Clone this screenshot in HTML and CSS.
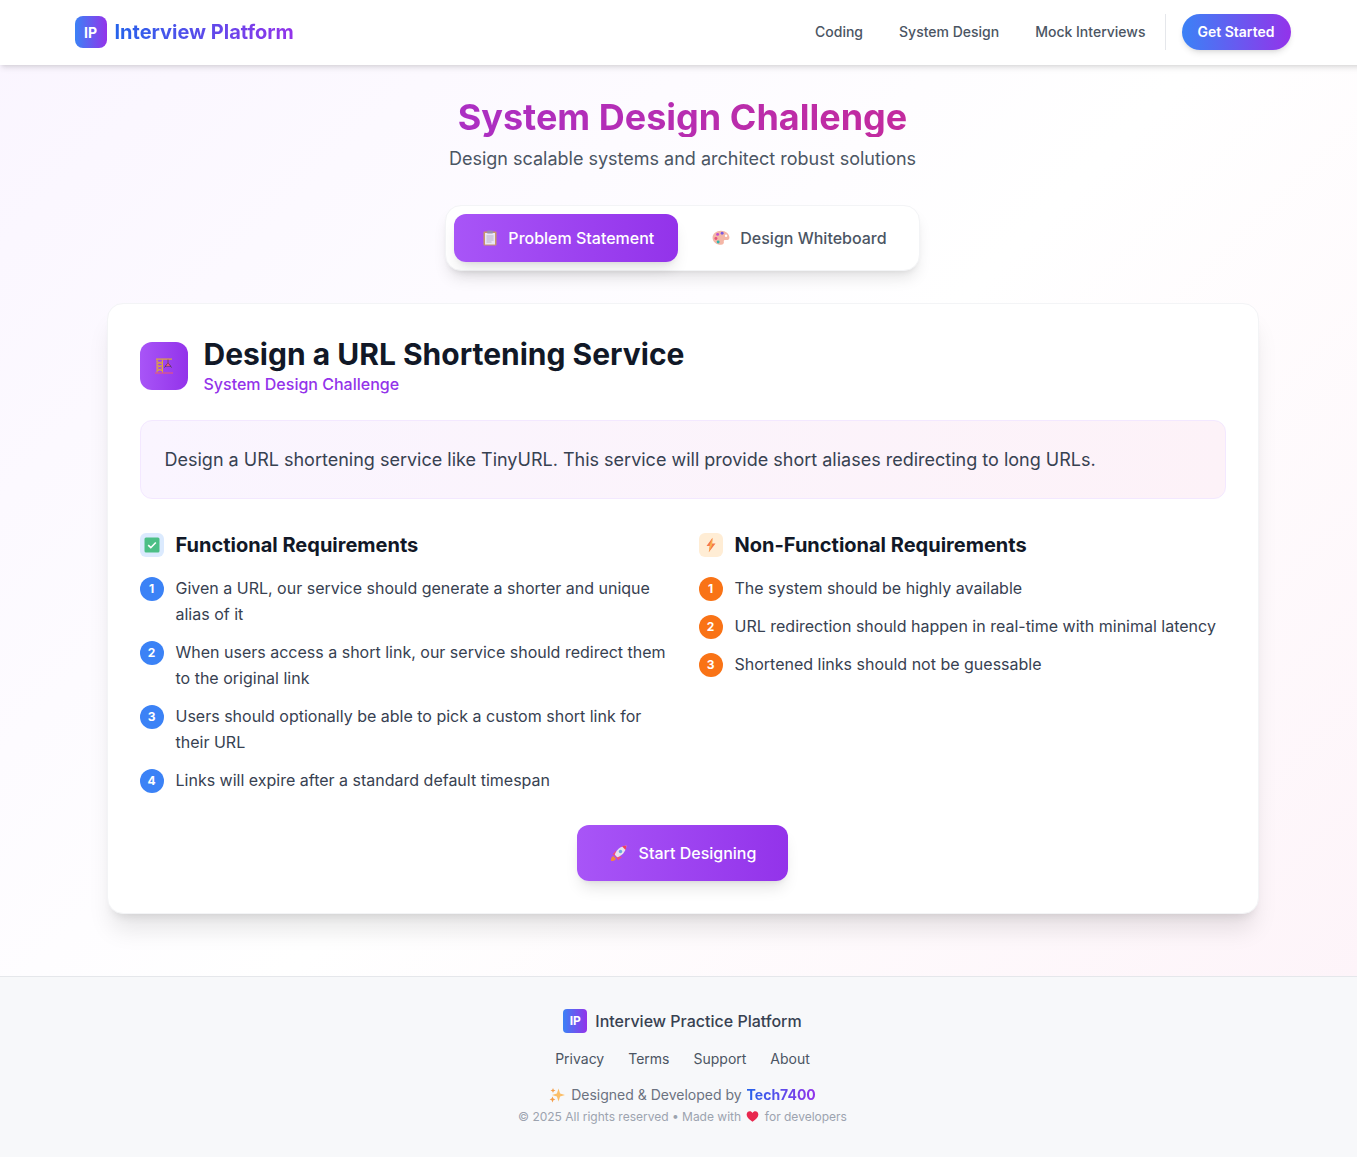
FILE: index.html
```html
<!DOCTYPE html>
<html lang="en">
<head>
  <meta charset="UTF-8">
  <meta name="viewport" content="width=device-width, initial-scale=1.0">
  <title>System Design Challenge</title>
  <link rel="stylesheet" href="styles.css">
</head>
<body>
  <div class="page">
    <nav class="navbar">
      <div class="nav-inner">
        <a class="brand">
          <span class="logo">IP</span>
          <span class="brand-name">Interview Platform</span>
        </a>
        <div class="nav-links">
          <a>Coding</a>
          <a>System Design</a>
          <a>Mock Interviews</a>
          <span class="nav-divider"></span>
          <button class="get-started">Get Started</button>
        </div>
      </div>
    </nav>

    <main class="main">
      <header class="hero">
        <h1>System Design Challenge</h1>
        <p>Design scalable systems and architect robust solutions</p>
      </header>

      <div class="tabs">
        <button class="tab tab-active">
          <svg class="emoji" viewBox="0 0 16 16">
            <rect x="1.500" y="1.500" width="13" height="14" rx="1" fill="#c9976b"/>
            <rect x="3" y="3" width="10" height="11.500" fill="#e9e4f4"/>
            <rect x="5" y="0.600" width="6" height="3" rx="0.800" fill="#9a8fae"/>
            <path d="M4.500 6h7M4.500 8h7M4.500 10h7M4.500 12h5" stroke="#b3a9c9" stroke-width="0.900"/>
          </svg>
          Problem Statement
        </button>
        <button class="tab">
          <svg class="emoji emoji-wide" viewBox="0 0 16 16">
            <path d="M8 1.500c4.200 0 7.500 2.700 7.500 6 0 1.800-1.400 2.600-3 2.300-1.500-.3-2.300.3-2 1.500.3 1.400-.5 2.700-2.500 2.700C3.800 14 .5 11.200.5 7.700S3.800 1.500 8 1.500z" fill="#f4b6a6"/>
            <circle cx="5" cy="4.800" r="1.300" fill="#c04fd0"/>
            <circle cx="9" cy="3.800" r="1.300" fill="#7a5be0"/>
            <circle cx="3.500" cy="8.500" r="1.300" fill="#e8577a"/>
            <circle cx="5.500" cy="11.500" r="1.300" fill="#2fb7b0"/>
            <circle cx="12.500" cy="6" r="1.100" fill="#fff"/>
          </svg>
          Design Whiteboard
        </button>
      </div>

      <section class="card">
        <div class="card-head">
          <span class="card-icon">
            <svg viewBox="0 0 20 20" width="20" height="20">
              <path d="M2 2.500h16v1.200H2z" fill="#e0a83a"/>
              <path d="M3 3.500v13M8.500 3.500v13M3 5.500l5.500 2.500M8.500 5.500L3 8M3 9l5.500 2.500M8.500 9L3 11.500M3 12.500L8.500 15M8.500 12.500L3 15" stroke="#e0a83a" stroke-width="1" fill="none"/>
              <path d="M14 3.500v3.500" stroke="#7a4a3a" stroke-width="0.800"/>
              <path d="M14 7l-3.500 4.500M14 7l3.500 4.500M11.500 10h5" stroke="#5b3a50" stroke-width="1" fill="none"/>
              <path d="M14 7l-2 3h4z" fill="#e8577a"/>
              <path d="M1 17h18" stroke="#ef5a6f" stroke-width="1"/>
            </svg>
          </span>
          <div>
            <h2>Design a URL Shortening Service</h2>
            <p class="card-sub">System Design Challenge</p>
          </div>
        </div>

        <div class="description">
          Design a URL shortening service like TinyURL. This service will provide short aliases redirecting to long URLs.
        </div>

        <div class="req-grid">
          <div class="req-col">
            <h3>
              <span class="req-icon req-icon-blue">
                <svg viewBox="0 0 16 16" width="16" height="16">
                  <rect x="0.500" y="0.500" width="15" height="15" rx="1.500" fill="#4cbf86"/>
                  <path d="M4.200 8.200l2.600 2.500 5-5.200" stroke="#fff" stroke-width="1.600" fill="none"/>
                </svg>
              </span>
              Functional Requirements
            </h3>
            <ul class="req-list">
              <li><span class="num">1</span><span>Given a URL, our service should generate a shorter and unique alias of it</span></li>
              <li><span class="num">2</span><span>When users access a short link, our service should redirect them to the original link</span></li>
              <li><span class="num">3</span><span>Users should optionally be able to pick a custom short link for their URL</span></li>
              <li><span class="num">4</span><span>Links will expire after a standard default timespan</span></li>
            </ul>
          </div>
          <div class="req-col">
            <h3>
              <span class="req-icon req-icon-orange">
                <svg viewBox="0 0 16 16" width="16" height="16">
                  <path d="M9.500 0.800L3.500 9h3.300l-1 6.200L12.500 6.500H9z" fill="#f5794a"/>
                  <path d="M9.500 0.800L6.500 9h.3l-1 6.200L9 8z" fill="#f9b24e"/>
                </svg>
              </span>
              Non-Functional Requirements
            </h3>
            <ul class="req-list req-list-orange">
              <li><span class="num">1</span><span>The system should be highly available</span></li>
              <li><span class="num">2</span><span>URL redirection should happen in real-time with minimal latency</span></li>
              <li><span class="num">3</span><span>Shortened links should not be guessable</span></li>
            </ul>
          </div>
        </div>

        <div class="start-row">
          <button class="start-btn">
            <svg class="emoji" viewBox="0 0 16 16">
              <path d="M0 16c-.2-2.600.6-4.300 2.400-4.900l2.500 2.500C4.300 15.400 2.600 16.200 0 16z" fill="#f08a3c"/>
              <path d="M1.500 9.500L5 5.500l1 5.500 5 1-4 3.500-1.500-3-2.500-2.500z" fill="#ef4f7d"/>
              <path d="M3.800 9.800C4.800 5.500 9 1.200 15.500 0.500c-.7 6.500-5 10.700-9.300 11.700z" fill="#e6e3ee"/>
              <path d="M11 1.300L15.500 0.500c-.1 1.600-.5 3.100-1 4.500z" fill="#ef3f5f"/>
              <circle cx="9.500" cy="6.500" r="1.700" fill="#6aa9e0"/>
            </svg>
            Start Designing
          </button>
        </div>
      </section>
    </main>

    <footer class="footer">
      <div class="footer-brand">
        <span class="logo logo-small">IP</span>
        <span>Interview Practice Platform</span>
      </div>
      <div class="footer-links">
        <a>Privacy</a>
        <a>Terms</a>
        <a>Support</a>
        <a>About</a>
      </div>
      <p class="credit">
        <svg class="emoji-small" viewBox="0 0 16 16">
          <path d="M9.500 1.500l1.600 4.900L16 8l-4.900 1.600L9.500 14.500 7.900 9.600 3 8l4.900-1.600z" fill="#fbbf6a"/>
          <path d="M3.500 9.500l.9 2 2 .9-2 .9-.9 2.200-.9-2.200-2-.9 2-.9z" fill="#f59e4a"/>
          <path d="M4 1l.7 1.800L6.500 3.500l-1.800.7L4 6l-.7-1.800-1.800-.7 1.800-.7z" fill="#f59e4a"/>
        </svg>
        Designed &amp; Developed by <strong>Tech7400</strong>
      </p>
      <p class="copyright">
        © 2025 All rights reserved • Made with
        <svg class="heart" viewBox="0 0 16 16">
          <path d="M8 14.500C3 11 .8 8.500.8 5.500.8 3 2.700 1.500 4.600 1.500 6 1.500 7.300 2.300 8 3.600 8.700 2.300 10 1.500 11.400 1.500c1.900 0 3.800 1.500 3.800 4 0 3-2.200 5.500-7.200 9z" fill="#e8284f"/>
        </svg>
        for developers
      </p>
    </footer>
  </div>
</body>
</html>
```

FILE: styles.css
```css
html {
  overflow-x: hidden;
}
body {
  margin: 0;
  font-family: Inter, "Noto Sans", sans-serif;
  color: #111827;
}
h1, h2, h3, p, ul {
  margin: 0;
  padding: 0;
}
button {
  font-family: inherit;
  border: 0;
  cursor: pointer;
}

.page {
  width: 1365px;
  background: linear-gradient(135deg, #faf5ff 0%, #ffffff 50%, #fdf2f8 100%);
}

/* navbar */
.navbar {
  position: relative;
  height: 65px;
  background: #fff;
  box-shadow: 0 4px 6px -1px rgba(0, 0, 0, 0.1), 0 2px 4px -2px rgba(0, 0, 0, 0.1);
}
.nav-inner {
  max-width: 1216px;
  height: 64px;
  margin: 0 auto;
  display: flex;
  align-items: center;
  justify-content: space-between;
}
.brand {
  display: flex;
  align-items: center;
  gap: 8px;
}
.logo {
  width: 32px;
  height: 32px;
  border-radius: 8px;
  display: flex;
  align-items: center;
  justify-content: center;
  color: #fff;
  font-size: 14px;
  font-weight: 700;
  background: linear-gradient(90deg, #3b82f6, #9333ea);
}
.logo-small {
  width: 24px;
  height: 24px;
  border-radius: 4px;
  font-size: 12px;
}
.brand-name {
  font-size: 20px;
  font-weight: 700;
  line-height: 28px;
  background: linear-gradient(90deg, #2563eb, #9333ea);
  -webkit-background-clip: text;
  background-clip: text;
  color: transparent;
}
.nav-links {
  display: flex;
  align-items: center;
  gap: 36px;
  font-size: 14px;
  font-weight: 500;
  color: #4b5563;
}
.nav-links a {
  padding-bottom: 2px;
}
.nav-divider {
  width: 1px;
  height: 36px;
  margin-left: -17px;
  margin-right: -20px;
  background: #e5e7eb;
}
.get-started {
  width: 109px;
  height: 36px;
  padding: 0 0 2px;
  border-radius: 18px;
  color: #fff;
  font-size: 14px;
  font-weight: 600;
  background: linear-gradient(90deg, #3b82f6, #9333ea);
  box-shadow: 0 4px 6px -1px rgba(0, 0, 0, 0.1), 0 2px 4px -2px rgba(0, 0, 0, 0.1);
}

/* main */
.main {
  padding: 32px 0 62px;
}
.hero {
  text-align: center;
}
.hero h1 {
  font-size: 36px;
  line-height: 40px;
  font-weight: 700;
  background: linear-gradient(90deg, #9333ea, #db2777);
  -webkit-background-clip: text;
  background-clip: text;
  color: transparent;
  margin-bottom: 8px;
}
.hero p {
  font-size: 18px;
  line-height: 28px;
  color: #4b5563;
}

.tabs {
  width: max-content;
  margin: 32px auto;
  padding: 8px;
  display: flex;
  gap: 8px;
  background: #fff;
  border: 1px solid #f3f4f6;
  border-radius: 16px;
  box-shadow: 0 10px 15px -3px rgba(0, 0, 0, 0.1), 0 4px 6px -4px rgba(0, 0, 0, 0.1);
}
.tab {
  height: 48px;
  padding: 0 24px;
  display: flex;
  align-items: center;
  gap: 8px;
  background: none;
  border-radius: 12px;
  font-size: 16px;
  font-weight: 500;
  color: #4b5563;
}
.tab-active {
  color: #fff;
  background: linear-gradient(90deg, #a855f7, #9333ea);
  box-shadow: 0 10px 15px -3px rgba(0, 0, 0, 0.1), 0 4px 6px -4px rgba(0, 0, 0, 0.1);
}
.emoji {
  width: 16px;
  height: 16px;
  margin: 0 2px 0 4px;
}
.emoji-wide {
  width: 18px;
  height: 18px;
  margin: 0 2px 0 2px;
}

/* card */
.card {
  width: 1086px;
  margin: 0 auto;
  padding: 32px;
  background: #fff;
  border: 1px solid #f3f4f6;
  border-radius: 16px;
  box-shadow: 0 20px 25px -5px rgba(0, 0, 0, 0.1), 0 8px 10px -6px rgba(0, 0, 0, 0.1);
}
.card-head {
  display: flex;
  align-items: center;
  gap: 16px;
  margin-bottom: 24px;
}
.card-icon {
  width: 48px;
  height: 48px;
  flex: none;
  border-radius: 12px;
  display: flex;
  align-items: center;
  justify-content: center;
  background: linear-gradient(90deg, #a855f7, #9333ea);
}
.card-head h2 {
  font-size: 30px;
  line-height: 36px;
  font-weight: 700;
}
.card-sub {
  font-size: 16px;
  line-height: 24px;
  font-weight: 500;
  color: #9333ea;
}
.description {
  padding: 24px;
  font-size: 18px;
  line-height: 29px;
  color: #374151;
  border: 1px solid #f3e8ff;
  border-radius: 12px;
  background: linear-gradient(90deg, #faf5ff, #fdf2f8);
}

.req-grid {
  display: grid;
  grid-template-columns: 1fr 1fr;
  gap: 32px;
  margin-top: 32px;
}
.req-col h3 {
  display: flex;
  align-items: center;
  gap: 12px;
  font-size: 20px;
  line-height: 28px;
  font-weight: 700;
  margin-bottom: 16px;
}
.req-icon {
  width: 24px;
  height: 24px;
  border-radius: 6px;
  display: flex;
  align-items: center;
  justify-content: center;
}
.req-icon-blue {
  background: #dbeafe;
}
.req-icon-orange {
  background: #ffedd5;
}
.req-list {
  list-style: none;
  display: flex;
  flex-direction: column;
  gap: 12px;
  font-size: 16px;
  line-height: 26px;
  color: #374151;
}
.req-list li {
  display: flex;
  gap: 12px;
}
.num {
  width: 24px;
  height: 24px;
  flex: none;
  margin-top: 2px;
  border-radius: 50%;
  display: flex;
  align-items: center;
  justify-content: center;
  color: #fff;
  font-size: 12px;
  font-weight: 700;
  background: #3b82f6;
}
.req-list-orange .num {
  background: #f97316;
}

.start-row {
  display: flex;
  justify-content: center;
  margin-top: 32px;
}
.start-btn {
  height: 56px;
  padding: 0 32px;
  display: flex;
  align-items: center;
  gap: 8px;
  color: #fff;
  font-size: 16px;
  font-weight: 500;
  border-radius: 12px;
  background: linear-gradient(90deg, #a855f7, #9333ea);
  box-shadow: 0 10px 15px -3px rgba(0, 0, 0, 0.1), 0 4px 6px -4px rgba(0, 0, 0, 0.1);
}
.start-btn .emoji {
  margin: 0 4px 0 2px;
}

/* footer */
.footer {
  height: 181px;
  padding-top: 32px;
  box-sizing: border-box;
  text-align: center;
  background: #f7f8fa;
  border-top: 1px solid #e5e7eb;
}
.footer-brand {
  display: flex;
  align-items: center;
  justify-content: center;
  gap: 8px;
  font-size: 16px;
  font-weight: 500;
  line-height: 24px;
  color: #374151;
}
.footer-links {
  display: flex;
  justify-content: center;
  gap: 24px;
  margin-top: 16px;
  font-size: 14px;
  line-height: 20px;
  color: #4b5563;
}
.credit {
  margin-top: 16px;
  font-size: 14px;
  line-height: 20px;
  color: #6b7280;
}
.credit strong {
  margin-left: 1px;
  font-weight: 700;
  background: linear-gradient(90deg, #2563eb, #9333ea);
  -webkit-background-clip: text;
  background-clip: text;
  color: transparent;
}
.emoji-small {
  width: 16px;
  height: 16px;
  margin-right: 2px;
  vertical-align: -3px;
}
.copyright {
  margin-top: 4px;
  font-size: 12px;
  line-height: 16px;
  color: #9ca3af;
}
.heart {
  width: 13px;
  height: 13px;
  margin: 0 2px;
  vertical-align: -2px;
}
```
